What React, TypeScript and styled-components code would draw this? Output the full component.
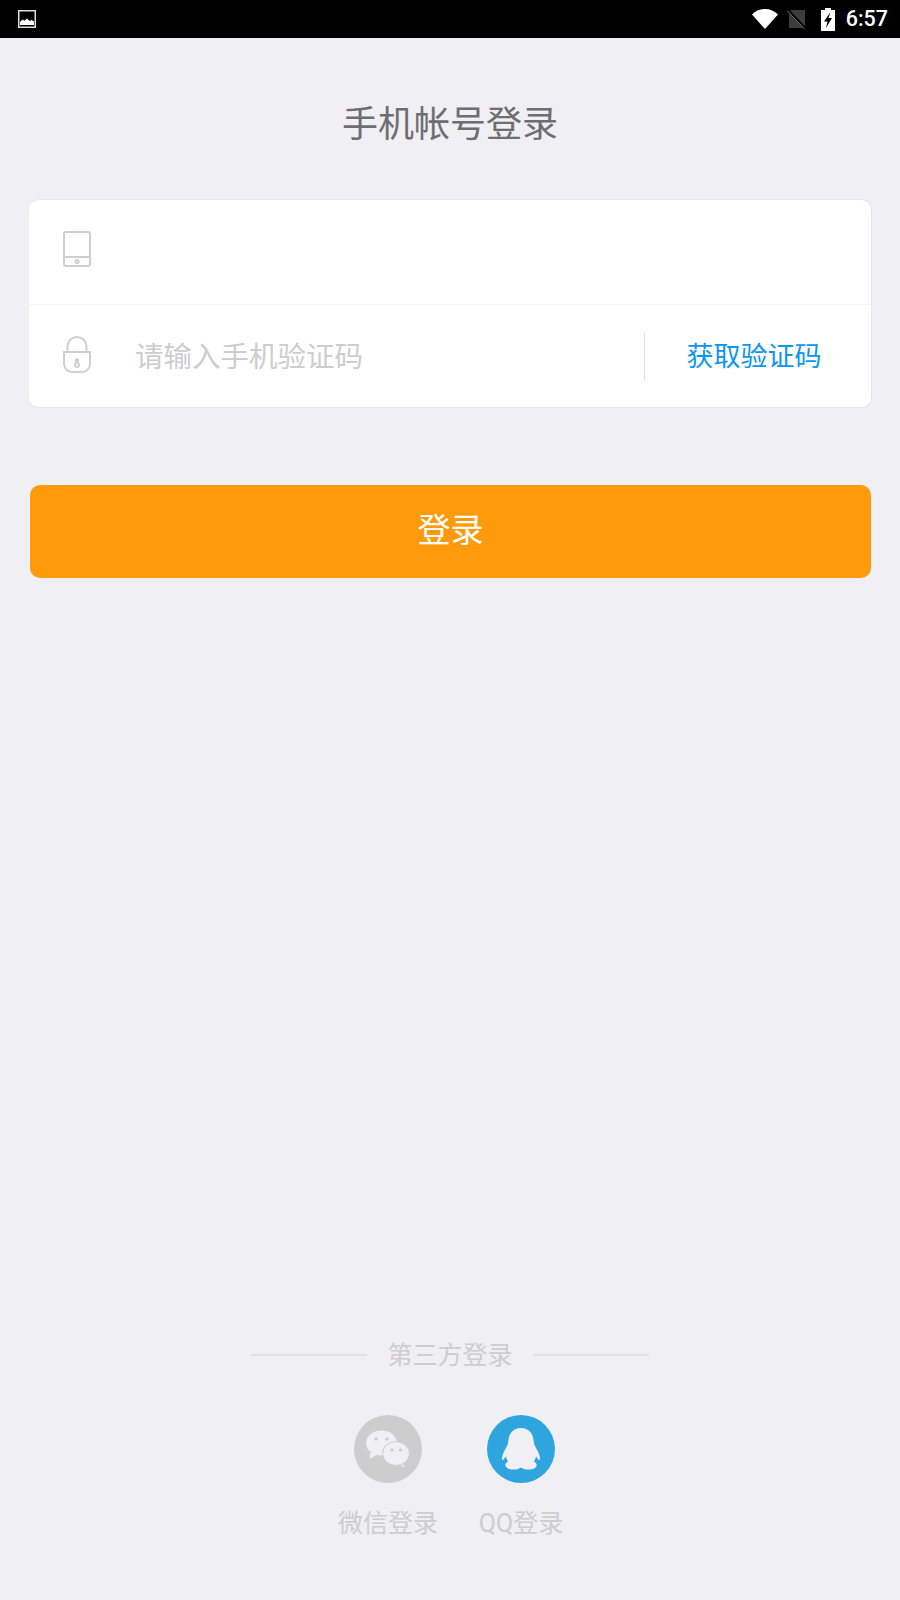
import styled, { createGlobalStyle } from 'styled-components';

const GlobalStyle = createGlobalStyle`
  html, body {
    margin: 0;
    padding: 0;
    background-color: #efeff4;
    font-family: 'Roboto', 'Noto Sans CJK SC', sans-serif;
  }
`;

const Page = styled.div`
  width: 900px;
  height: 1600px;
  display: flex;
  flex-direction: column;
  background-color: #efeff4;
  overflow: hidden;
`;

const StatusBar = styled.div`
  height: 38px;
  flex: none;
  display: flex;
  align-items: center;
  padding: 0 12px 0 18px;
  background-color: #000;
  color: #fff;
`;

const StatusIcons = styled.div`
  margin-left: auto;
  display: flex;
  align-items: center;
`;

const Clock = styled.span`
  margin-left: 11px;
  font-size: 21.5px;
  font-weight: 500;
  line-height: 38px;
`;

const Title = styled.h1`
  margin: 0;
  padding-top: 62px;
  height: 99px;
  font-size: 36px;
  font-weight: 400;
  line-height: 50px;
  text-align: center;
  color: #6e6e72;
`;

const Card = styled.div`
  margin: 0 28px 0 29px;
  height: 209px;
  box-sizing: border-box;
  display: flex;
  flex-direction: column;
  background-color: #fff;
  border: 1px solid #e6e6ea;
  border-left: none;
  border-radius: 10px;
`;

const Row = styled.div<{ $divided?: boolean }>`
  flex: 1;
  display: flex;
  align-items: center;
  padding-left: 33px;
  padding-top: ${(p) => (p.$divided ? '2px' : '0')};
  border-bottom: ${(p) => (p.$divided ? '1px solid #f4f4f6' : 'none')};
`;

const FieldIcon = styled.svg<{ $lift: number }>`
  flex: none;
  width: 30px;
  height: 40px;
  margin-bottom: ${(p) => p.$lift}px;
`;

const Input = styled.input`
  flex: 1;
  min-width: 0;
  margin-left: 43px;
  border: none;
  outline: none;
  padding: 2px 0 0;
  background: none;
  font-family: inherit;
  font-size: 28.5px;
  color: #333;

  &::placeholder {
    color: #cdcdcd;
    opacity: 1;
  }
`;

const CodeButton = styled.button`
  flex: none;
  box-sizing: border-box;
  width: 227px;
  height: 48px;
  margin-top: 2px;
  padding: 0 8px 6px 0;
  border: none;
  border-left: 1px solid #e0e0e0;
  background: none;
  font-family: inherit;
  font-size: 27px;
  color: #0d96f0;
`;

const LoginButton = styled.button`
  display: block;
  margin: 77px 29px 0 30px;
  height: 93px;
  padding: 0 0 8px;
  border: none;
  border-radius: 10px;
  background-color: #ff9a0a;
  font-family: inherit;
  font-size: 33px;
  font-weight: 400;
  color: #fff;
`;

const ThirdParty = styled.section`
  margin-top: auto;
  padding-bottom: 58px;
  display: flex;
  flex-direction: column;
  align-items: center;
`;

const DividerRow = styled.div`
  display: flex;
  align-items: center;
  gap: 20px;
  height: 36px;
`;

const Line = styled.span`
  width: 116px;
  height: 2px;
  margin-top: 4px;
  background-color: #e2e2e5;
`;

const DividerText = styled.span`
  font-size: 25px;
  color: #cdcdcd;
`;

const Providers = styled.div`
  display: flex;
  justify-content: center;
  gap: 33px;
  margin: 44px 0 0 9px;
`;

const Provider = styled.div`
  width: 100px;
  display: flex;
  flex-direction: column;
  align-items: center;
`;

const Badge = styled.div<{ $color: string }>`
  width: 68px;
  height: 68px;
  border-radius: 50%;
  display: flex;
  align-items: center;
  justify-content: center;
  background-color: ${(p) => p.$color};
`;

const ProviderLabel = styled.span`
  margin-top: 23px;
  font-size: 25px;
  line-height: 36px;
  white-space: nowrap;
  color: #cdcdcd;
`;

function PictureIcon() {
  return (
    <svg width="18" height="18" viewBox="0 0 18 18" fill="none">
      <rect x="0.75" y="0.75" width="16.5" height="16.5" stroke="#ddd" strokeWidth="1.5" />
      <path d="M2 15v-3l2.500-2.500 2 1.200 2.500-2.200 2.500 2.500 2-1 2.500 1.500V15z" fill="#fff" />
    </svg>
  );
}

function WifiIcon() {
  return (
    <svg width="26" height="20" viewBox="0 0 26 20" style={{ marginLeft: 2 }}>
      <path d="M0 5.500C3.500 2 8 0 13 0s9.500 2 13 5.500L13 20z" fill="#fff" />
    </svg>
  );
}

function NoSimIcon() {
  return (
    <svg width="20" height="20" viewBox="0 0 20 20" style={{ marginLeft: 9 }}>
      <path d="M2 1h16v18H2z" fill="#3c3c3c" />
      <path d="M0 0l19 20" stroke="#000" strokeWidth="2.500" />
      <path d="M0 1.500l18 19" stroke="#707070" strokeWidth="1" />
    </svg>
  );
}

function BatteryIcon() {
  return (
    <svg width="14" height="23" viewBox="0 0 14 23" style={{ marginLeft: 14 }}>
      <path d="M4 0h6v2h4v21H0V2h4z" fill="#fff" />
      <path d="M9.500 4L3 13.500h3.500L5 20l6-10H7.500z" fill="#000" />
    </svg>
  );
}

function TabletIcon() {
  return (
    <FieldIcon $lift={8} viewBox="0 0 30 40" fill="none" stroke="#cfcfcf" strokeWidth="2">
      <rect x="2" y="3" width="26" height="34" rx="2" />
      <path d="M2 28h26" />
      <circle cx="15" cy="32.500" r="1.600" />
    </FieldIcon>
  );
}

function LockIcon() {
  return (
    <FieldIcon $lift={4} viewBox="0 0 30 40" fill="none" stroke="#cfcfcf" strokeWidth="2">
      <path d="M5.500 18v-5.500a9.500 9.500 0 0 1 19 0V18" />
      <path d="M2 18h26v12a8 8 0 0 1-8 8H10a8 8 0 0 1-8-8z" />
      <circle cx="15" cy="31" r="2" />
      <circle cx="15" cy="26.500" r="1.300" />
    </FieldIcon>
  );
}

function WechatIcon() {
  return (
    <svg width="46" height="38" viewBox="0 0 46 38">
      <ellipse cx="16.500" cy="13" rx="15.500" ry="12.500" fill="#efeff4" />
      <path d="M6 20l-1.500 9 9-5z" fill="#efeff4" />
      <circle cx="11" cy="9" r="1.800" fill="#cdcdcd" />
      <circle cx="22" cy="9" r="1.800" fill="#cdcdcd" />
      <path d="M36 31l4 6.500-8-3.500z" fill="#efeff4" />
      <ellipse cx="31" cy="23.500" rx="13.500" ry="12" fill="#efeff4" stroke="#cdcdcd" strokeWidth="1" />
      <circle cx="27" cy="20" r="1.600" fill="#cdcdcd" />
      <circle cx="35.500" cy="20" r="1.600" fill="#cdcdcd" />
    </svg>
  );
}

function QQIcon() {
  return (
    <svg width="38" height="42" viewBox="0 0 38 42">
      <path
        d="M19 0C27 0 31 6 31.500 12C31.800 15 32.500 17.500 34 20C36 23 38 27 38 31C38 32.500 37 32.500 36 31L34 28.500C33.500 30.500 33 32 32 33.500C34 34.500 35 36 34.500 38C33.500 41 28 42 24 41.500C22 41.200 20 40 19 39.500C18 40 16 41.200 14 41.500C10 42 4.500 41 3.500 38C3 36 4 34.500 6 33.500C5 32 4.500 30.500 4 28.500L2 31C1 32.500 0 32.500 0 31C0 27 2 23 4 20C5.500 17.500 6.200 15 6.500 12C7 6 11 0 19 0z"
        fill="#efeff4"
      />
    </svg>
  );
}

export default function App() {
  return (
    <Page>
      <GlobalStyle />
      <StatusBar>
        <PictureIcon />
        <StatusIcons>
          <WifiIcon />
          <NoSimIcon />
          <BatteryIcon />
          <Clock>6:57</Clock>
        </StatusIcons>
      </StatusBar>
      <Title>手机帐号登录</Title>
      <Card>
        <Row $divided>
          <TabletIcon />
          <Input type="tel" />
        </Row>
        <Row>
          <LockIcon />
          <Input placeholder="请输入手机验证码" />
          <CodeButton>获取验证码</CodeButton>
        </Row>
      </Card>
      <LoginButton>登录</LoginButton>
      <ThirdParty>
        <DividerRow>
          <Line />
          <DividerText>第三方登录</DividerText>
          <Line />
        </DividerRow>
        <Providers>
          <Provider>
            <Badge $color="#cdcdcd">
              <WechatIcon />
            </Badge>
            <ProviderLabel>微信登录</ProviderLabel>
          </Provider>
          <Provider>
            <Badge $color="#2fa5e0">
              <QQIcon />
            </Badge>
            <ProviderLabel>QQ登录</ProviderLabel>
          </Provider>
        </Providers>
      </ThirdParty>
    </Page>
  );
}
